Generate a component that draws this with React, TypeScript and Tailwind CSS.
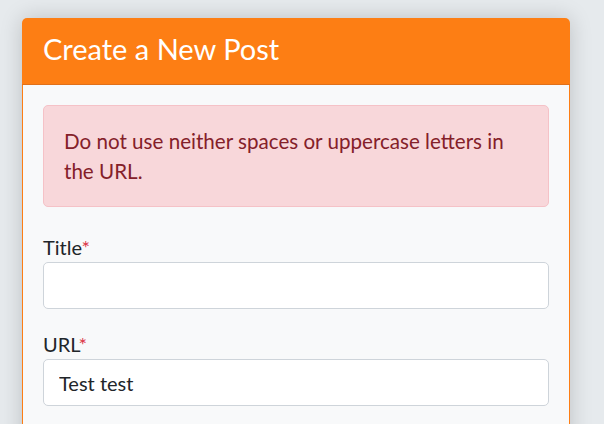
import React from "react";

export default function App() {
  return (
    <div
      className="min-h-screen w-full overflow-hidden bg-[#e6eaed] pt-[18px]"
      style={{ fontFamily: '"Lato", "Open Sans", sans-serif' }}
    >
      <div className="ml-[22px] w-[548px] rounded-t-[5px] shadow-[0_0_22px_rgba(0,0,0,0.18)]">
        <div className="h-[67px] rounded-t-[5px] border-b border-[#e0701a] bg-[#fd7e14] px-[21px] pt-[12px]">
          <h2 className="text-[29px] leading-[38px] font-normal text-white">Create a New Post</h2>
        </div>
        <div className="h-[400px] border-x border-[#fd7e14] bg-[#f8f9fa] px-[20px] pt-[20px]">
          <div className="mb-[25px] h-[102px] rounded-[5px] border border-[#f5c2c7] bg-[#f8d7da] px-[20px] py-[20px] text-[20.6px] leading-[30px] text-[#842029]">
            Do not use neither spaces or uppercase letters in the URL.
          </div>
          <div className="mb-[20px]">
            <label className="block text-[20px] leading-[30px] text-[#212529]">
              Title<span className="text-[#dc3545]">*</span>
            </label>
            <input
              type="text"
              className="block h-[47px] w-full rounded-[5px] border border-[#ced4da] bg-white px-[15px] text-[20px] text-[#212529] outline-none"
              style={{ fontFamily: "inherit" }}
            />
          </div>
          <div className="mb-[20px]">
            <label className="block text-[20px] leading-[30px] text-[#212529]">
              URL<span className="text-[#dc3545]">*</span>
            </label>
            <input
              type="text"
              defaultValue="Test test"
              className="block h-[47px] w-full rounded-[5px] border border-[#ced4da] bg-white px-[15px] text-[20px] text-[#212529] outline-none"
              style={{ fontFamily: "inherit" }}
            />
          </div>
        </div>
      </div>
    </div>
  );
}
